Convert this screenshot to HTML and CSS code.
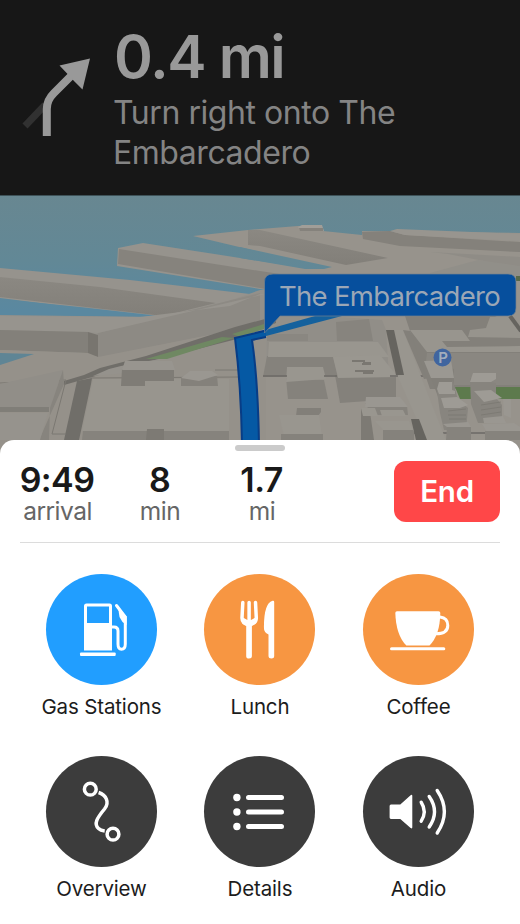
FILE: index.html
```html
<!DOCTYPE html>
<html lang="en">
<head>
<meta charset="utf-8">
<title>Navigation</title>
<link rel="stylesheet" href="styles.css">
</head>
<body>
<main class="phone">
  <header class="maneuver">
    <svg class="turn" viewBox="0 0 90 150" aria-hidden="true">
      <path d="M25 126L45 105" stroke="#313131" stroke-width="7" fill="none"/>
      <path d="M46.8 136V109Q46.8 100 54 93L72 75" stroke="#999" stroke-width="8" fill="none"/>
      <path d="M90 58.5L59.5 65.5L68.5 75L73.5 80.5L82.5 89.5Z" fill="#999"/>
    </svg>
    <div class="direction">
      <h1 class="distance">0.4 mi</h1>
      <p class="instruction">Turn right onto The<br>Embarcadero</p>
    </div>
  </header>

  <section class="map">
    <svg class="scene" viewBox="0 195 520 260" aria-hidden="true">
      <defs>
        <linearGradient id="water" gradientUnits="userSpaceOnUse" x1="0" y1="195" x2="0" y2="360"><stop offset="0" stop-color="#688791"/><stop offset=".4" stop-color="#628896"/><stop offset=".7" stop-color="#5a88a0"/></linearGradient>
        <linearGradient id="wall" x1="0" y1="0" x2="0" y2="1"><stop offset="0" stop-color="#8b8882"/><stop offset="1" stop-color="#827f79"/></linearGradient>
      </defs>
      <path fill="url(#water)" d="M0 195H520V360H0Z"/>
      <path fill="#3e5258" d="M0 195H520V196H0Z"/>
      <!-- piers -->
      <path fill="#97938c" d="M193 236L248 230L298 226L300 226V229L323 231L362 235V231L520 233V460H240V310L265 292V276L312 268L260 252Z"/>
      <path fill="#96938d" d="M118 248L143 243L260 261L312 269V295L260 289L117 266Z"/>
      <path fill="#86837d" d="M119 249L260 271L300 277V295L260 288L118 264Z"/>
      <path fill="url(#water)" d="M240 247L332 267L324 269L305 269L240 258Z"/>
      <path fill="url(#wall)" d="M248 230L260 230L388 258L346 265L260 246L248 245Z"/>
      <path fill="#a19e98" d="M298 227L302 225H322L324 231L300 230Z"/>
      <path fill="#85827c" d="M299 228H323V231L300 231Z"/>
      <path fill="#84817b" d="M362 232L390 231L405 235L520 242V252L400 246L363 239Z"/>
      <path fill="#98958f" d="M390 231L397 229L520 234V241L405 235Z"/>
      <path fill="#8f8c86" d="M430 252L520 257V269L484 261L448 254Z"/>
      <path fill="#918f89" d="M478 260L430 273V278H520V266Z"/>
      <path fill="#96938d" d="M0 268L130 280L250 294L220 320L160 318L0 298Z"/>
      <path fill="url(#wall)" d="M0 277L100 287L216 303L163 316L0 297Z"/>
      <path fill="#93908a" d="M0 315L160 317L220 304L260 290L300 285V345L160 460H0Z"/>
      <path fill="url(#water)" d="M0 299L80 307L160 316L110 316L0 314Z"/>
      <path fill="#8d8a84" d="M98 333L260 293V325L101 357L88 356Z"/>
      <path fill="#97948e" d="M0 316L140 317L230 306L260 294L266 294L98 333L88 332L0 330Z"/>
      <path fill="#83807a" d="M0 330L88 332V353L0 350Z"/>
      <path fill="#78756f" d="M88 332L98 335V357L88 355Z"/>
      <path fill="#95918a" d="M98 357L260 325L266 320V455H0V350L88 353Z"/>
      <path fill="#5f8595" d="M0 353L34 354L0 365Z"/>
      <!-- waterfront road -->
      <path fill="#706e69" d="M64 381L84 375L100 368L146 356L235 327L276 316L276 323L233 340L124 368L64 385Z"/>
      <path fill="#6f8862" d="M146 359L222 337L234 338L167 359Z"/>
      <path fill="#6f8862" d="M232 334L264 324V329L240 337Z"/>
      <path fill="#95928c" d="M109 369L121 366L160 359L160 370L93 376Z"/>
      <path fill="#706e69" d="M77 381L92 378L91 384L79 440H64Z"/>
      <path d="M0 383L66 380L52 434H66M90 378L238 377M215 370H240" stroke="#7b7872" fill="none"/>
      <!-- left blocks -->
      <path fill="#918e88" d="M0 384L63 370L50 408H0Z"/>
      <path fill="#807e78" d="M0 407H49V412H0Z"/>
      <path fill="#87847e" d="M50 408L63 370L64 384L39 440H49Z"/>
      <path fill="#96938d" d="M0 413H48L40 440H0Z"/>
      <path fill="#98958e" d="M93 379H229V431H82Z"/>
      <path fill="#86837d" d="M83 431H229V440H82Z"/>
      <path fill="#7d7a74" d="M147 429H164V440H146Z"/>
      <path fill="#7f7c76" d="M122 369H174V381H145V386H121Z"/>
      <path fill="#98958f" d="M125 361H172L175 370H122Z"/>
      <path fill="#84817b" d="M181 378L217 376L218 386H181Z"/>
      <path fill="#9a9791" d="M181 378L190 371L212 371L218 375L199 381Z"/>
      <!-- center blocks -->
      <path fill="#918e88" d="M267 327L340 317L382 320L386 330L389 377H267Z"/>
      <path fill="#87847e" d="M336 322L369 319L373 341H337Z"/>
      <path fill="#8a8781" d="M267 334H308V341H267Z"/>
      <path fill="#85827c" d="M267 356L333 357L338 375L263 377Z"/>
      <path fill="#99968f" d="M269 342L378 342L389 357H268Z"/>
      <path fill="#84817b" d="M335 375H396V399L340 403Z"/>
      <path fill="#9a9790" d="M333 357L380 355L398 377L338 378Z"/>
      <path d="M352 361H364V363H371M355 371H374M362 364H371M363 373H373" stroke="#7a7771" stroke-width="2" fill="none"/>
      <path fill="#85827c" d="M286 378L324 380L328 399H288Z"/>
      <path fill="#99968f" d="M287 367H323L326 379L286 382Z"/>
      <path fill="#827f79" d="M297 408H321V412L318 416H296Z"/>
      <path fill="#99968f" d="M279 415H319L322 436H284Z"/>
      <path fill="#85827c" d="M281 434H323V440H281Z"/>
      <path d="M263 376H287M324 376H337M390 376H425M400 433H520" stroke="#6c6a65" stroke-width="1.3"/>
      <!-- side street -->
      <path fill="#99968f" d="M394 330L403 330L434 410L446 440H426L398 377Z"/>
      <path fill="#83807a" d="M403 330L410 331L431 378L424 379Z"/>
      <path fill="#66645f" d="M386 330H394L404 375H396Z"/>
      <path fill="#66645f" d="M411 419H419L427 440H416Z"/>
      <path fill="#86837d" d="M365 403L407 406L408 415H372Z"/>
      <path fill="#9a9791" d="M366 397H400L408 407H365Z"/>
      <path fill="#7d7a74" d="M361 408L370 412L374 440H361Z"/>
      <path fill="#99968f" d="M361 408H375L378 416H363ZM380 410H403L406 416H382ZM375 421H409L413 430H383Z"/>
      <path fill="#85827c" d="M383 430H414V440H383Z"/>
      <!-- right blocks -->
      <path fill="#83807a" d="M405 316H495L520 330V389H430L410 331Z"/>
      <path fill="#98958e" d="M410 330H462L470 341H442L447 347L520 346V352H427Z"/>
      <path fill="#97948d" d="M470 330L486 328L490 317H507L520 331V338L468 337Z"/>
      <path d="M510 316L521 331" stroke="#66645f" stroke-width="4"/>
      <path fill="#8a8781" d="M427 353H520V385H454V369L426 361Z"/>
      <path fill="#9b9892" d="M424 361L451 360L454 378H431Z"/>
      <path fill="#827f79" d="M431 378H452V400L440 402Z"/>
      <path fill="#5d7a4d" d="M455 387H520V399H460Z"/>
      <path fill="#88857f" d="M437 391L453 381L458 400L468 408L466 430H444L440 413Z"/>
      <path fill="#9e9b95" d="M439 382H452V390L455 391V394H439L437 389ZM441 398L457 397L468 405L460 408H444Z"/>
      <path fill="#87847e" d="M470 378L496 383V398L502 405V423H478L471 404Z"/>
      <path fill="#9e9b95" d="M473 373H496V379L491 382H470ZM474 391L491 390L502 398L484 402Z"/>
      <path d="M448 411L466 409M448 415H466M449 419H466M481 405L501 402M481 410L501 407M481 415L501 412" stroke="#7a7771" stroke-width=".8"/>
      <path fill="#9a9791" d="M443 424L468 422L471 427H447ZM483 418L503 416L506 423H484ZM503 399H511V418L504 415ZM482 424L514 423L520 427V432H487Z"/>
      <path fill="#86837d" d="M447 427H471V440H446ZM485 431H520V440H485Z"/>
      <path fill="#57694b" d="M516 276H520V281H516Z"/>
      <!-- active route -->
      <path fill="#15619d" d="M262 331L315 316H342L266 336Z"/>
      <path fill="#0559a4" d="M235 338L266 330V337L252 340Q258 380 259 444H242Q241 385 235 338Z"/>
      <path d="M266 337L252 340Q258 380 259 444M242 444Q241 385 235 338L266 330.500" fill="none" stroke="#083d86" stroke-width="2"/>
      <path fill="#064f9d" stroke="#75828c" stroke-width=".7" d="M273 274H508Q516 274 516 282V308Q516 316 508 316H280L264.500 333V282Q264.500 274 273 274Z"/>
      <circle cx="442.500" cy="357.500" r="9" fill="#40659f"/>
    </svg>
    <span class="road-name">The Embarcadero</span>
    <span class="parking">P</span>
  </section>

  <section class="sheet">
    <div class="grabber"></div>
    <div class="trip">
      <dl class="stats">
        <div class="stat"><dt>9:49</dt><dd>arrival</dd></div>
        <div class="stat"><dt>8</dt><dd>min</dd></div>
        <div class="stat"><dt>1.7</dt><dd>mi</dd></div>
      </dl>
      <button class="end">End</button>
    </div>
    <div class="actions">
      <div class="action">
        <svg class="disc blue" viewBox="0 0 111 111" aria-hidden="true">
          <path fill="#fff" fill-rule="evenodd" d="M40.500 29.500H63.500Q66 29.500 66 32V76.500H38V32Q38 29.500 40.500 29.500ZM41 32.500V49H63V32.500Z"/>
          <rect x="34" y="78.600" width="35.700" height="3.400" rx="1" fill="#fff"/>
          <path d="M66 53H68Q72 53 72 57V70Q72 75.300 75.500 75.300Q79.300 75.300 79.300 70V43L70.500 31.500" fill="none" stroke="#fff" stroke-width="3" stroke-linecap="round"/>
          <path fill="#fff" d="M72 33L80.600 42.500V51L76.500 48L73.500 43Z"/>
        </svg>
        <span class="label">Gas Stations</span>
      </div>
      <div class="action">
        <svg class="disc orange" viewBox="0 0 111 111" aria-hidden="true">
          <path d="M38.800 28.500L38 44Q38 50 45.100 50Q52.300 50 52.300 44L51.500 28.500M45.100 28.500V50" fill="none" stroke="#fff" stroke-width="3.500" stroke-linecap="round"/>
          <path fill="#fff" d="M38 43L43.400 46H47L52.300 43Q53.500 50 47.900 52V82Q47.900 84.500 45 84.500T42.200 82V52Q36.500 50 38 43Z"/>
          <path fill="#fff" d="M70.200 28V82Q70.200 84.500 67.400 84.500T64.500 82V60.500Q59.700 58.500 59.900 53Q60 29 68.500 26.800Q70.200 26.400 70.200 28Z"/>
        </svg>
        <span class="label">Lunch</span>
      </div>
      <div class="action">
        <svg class="disc orange" viewBox="0 0 111 111" aria-hidden="true">
          <path fill="#fff" d="M34 37.200H75.500Q77.300 37.200 77.300 39Q77 61 66.500 71.500H43.300Q33 61 32.300 39Q32.300 37.200 34 37.200Z"/>
          <path d="M75 42.900H77Q84.800 43.500 84.800 51.500Q84.800 59.800 73 59.800" fill="none" stroke="#fff" stroke-width="3"/>
          <rect x="27" y="73.200" width="55.300" height="3" rx="1.500" fill="#fff"/>
        </svg>
        <span class="label">Coffee</span>
      </div>
      <div class="action">
        <svg class="disc dark" viewBox="0 0 111 111" aria-hidden="true">
          <g fill="none" stroke="#fff" stroke-width="3.500" stroke-linecap="butt">
            <circle cx="44.300" cy="33.200" r="5.900"/><circle cx="67" cy="78.200" r="5.900"/>
            <path d="M52.600 36.500C60 39 64 46 58.500 53C51 62 47.500 68 52.500 72.500Q54.500 74.500 58.700 75"/>
          </g>
        </svg>
        <span class="label">Overview</span>
      </div>
      <div class="action">
        <svg class="disc dark" viewBox="0 0 111 111" aria-hidden="true">
          <g fill="#fff"><circle cx="32.900" cy="41.500" r="3.700"/><circle cx="32.900" cy="56" r="3.700"/><circle cx="32.900" cy="70.500" r="3.700"/></g>
          <path d="M44.500 41.500H77.500M44.500 56H77.500M44.500 70.500H77.500" stroke="#fff" stroke-width="5" stroke-linecap="round"/>
        </svg>
        <span class="label">Details</span>
      </div>
      <div class="action">
        <svg class="disc dark" viewBox="0 0 111 111" aria-hidden="true">
          <path fill="#fff" d="M28 48.500H37.300L47.600 39.200Q49.300 38 49.300 40V71.300Q49.300 73.200 47.600 72L37.300 62.900H28Q26.600 62.900 26.600 61.500V50Q26.600 48.500 28 48.500Z"/>
          <path d="M58.200 46.300Q64.300 55.700 58.200 65.200M66.200 40.500Q76.800 55.700 66.200 71M74.200 34.500Q88.500 55.700 74.200 77" fill="none" stroke="#fff" stroke-width="3.400" stroke-linecap="round"/>
        </svg>
        <span class="label">Audio</span>
      </div>
    </div>
  </section>
</main>
</body>
</html>
```

FILE: styles.css
```css
* { box-sizing: border-box; margin: 0; padding: 0; }

body {
  background: #fff;
  font-family: Inter, "Liberation Sans", sans-serif;
  overflow: hidden;
}

.phone {
  display: flex;
  flex-direction: column;
  width: 520px;
  height: 924px;
}

.maneuver {
  display: flex;
  flex: none;
  gap: 24px;
  height: 195px;
  background: #171717;
}

.turn { width: 90px; height: 150px; flex: none; }
.direction { padding-top: 20px; }

.distance {
  color: #999;
  font-size: 59px;
  font-weight: 600;
  line-height: 73px;
  letter-spacing: -1.4px;
  white-space: nowrap;
}

.instruction {
  margin-left: -1px;
  color: #848484;
  font-size: 32px;
  line-height: 40px;
  letter-spacing: -.45px;
  white-space: nowrap;
}

.map {
  position: relative;
  flex: none;
  height: 260px;
  margin-bottom: -15px;
}

.scene { display: block; width: 520px; height: 260px; }

.road-name {
  position: absolute;
  top: 81px;
  left: 279px;
  color: #9ba7b6;
  font-size: 27.5px;
  line-height: 40px;
  letter-spacing: -.7px;
  white-space: nowrap;
}

.parking {
  position: absolute;
  top: 153px;
  left: 433px;
  width: 20px;
  color: #a3adbc;
  font-size: 15px;
  font-weight: 600;
  line-height: 20px;
  text-align: center;
}

.sheet {
  position: relative;
  flex: 1;
  padding: 5px 20px 0;
  background: #fff;
  border-radius: 14px 14px 0 0;
}

.grabber {
  width: 50px;
  height: 6px;
  margin: 0 auto;
  background: #cbcbcb;
  border-radius: 3px;
}

.trip {
  display: flex;
  justify-content: space-between;
  height: 92px;
  padding-top: 9.5px;
  border-bottom: 1px solid #dcdcdc;
}

.stats { display: flex; padding-top: 1px; }
.stat { width: 102px; text-align: center; }
.stat:first-child { width: 75px; margin-right: 14px; }

.stat dt {
  color: #191919;
  font-size: 34px;
  font-weight: 600;
  line-height: 36px;
  letter-spacing: -.6px;
  margin-left: -1px;
}

.stat dd {
  color: #666;
  font-size: 24.5px;
  line-height: 26px;
  letter-spacing: -.5px;
}

.end {
  width: 106px;
  height: 61px;
  border: 0;
  border-radius: 12px;
  background: #ff4748;
  color: #fff;
  font: 600 29.5px/61px Inter, "Liberation Sans", sans-serif;
  letter-spacing: -.2px;
}

.actions {
  display: grid;
  grid-template-columns: repeat(3, 158.5px);
  grid-auto-rows: 182px;
  margin-left: 2.2px;
  padding-top: 30.5px;
}

.action { display: flex; flex-direction: column; align-items: center; }
.disc { width: 111px; height: 111px; border-radius: 50%; }
.blue { background: #219eff; }
.orange { background: #f79642; }
.dark { background: #3c3c3c; }

.label {
  margin-top: 9.5px;
  color: #1c1c1c;
  font-size: 20.5px;
  line-height: 26px;
  letter-spacing: -.15px;
  white-space: nowrap;
}
```
